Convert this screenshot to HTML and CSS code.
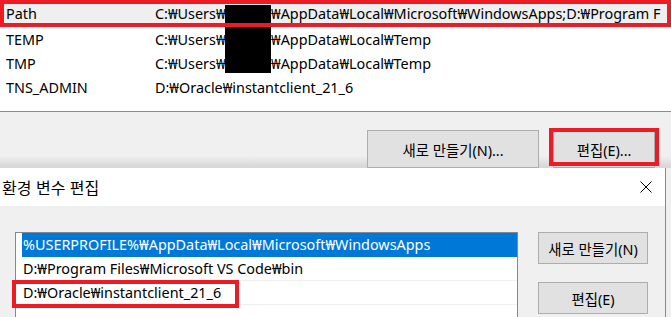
FILE: index.html
```html
<!DOCTYPE html>
<html lang="ko">
<head>
<meta charset="utf-8">
<link rel="stylesheet" href="styles.css">
</head>
<body>
<div class="screen">
  <section class="parent">
    <div class="varlist">
      <div class="vrow sel"><span class="vname">Path</span><span class="vval"><span class="upre">C:₩Users₩</span><span class="uname"></span>₩AppData₩Local₩Microsoft₩WindowsApps;D:₩Program F</span></div>
      <div class="vrow"><span class="vname">TEMP</span><span class="vval"><span class="upre">C:₩Users₩</span><span class="uname"></span>₩AppData₩Local₩Temp</span></div>
      <div class="vrow"><span class="vname">TMP</span><span class="vval"><span class="upre">C:₩Users₩</span><span class="uname"></span>₩AppData₩Local₩Temp</span></div>
      <div class="vrow"><span class="vname">TNS_ADMIN</span><span class="vval">D:₩Oracle₩instantclient_21_6</span></div>
      <div class="redact"></div>
      <div class="mark mark-path"></div>
    </div>
    <div class="btnbar">
      <button class="wbtn btn-new">새로 만들기(N)...</button>
      <button class="wbtn btn-edit">편집(E)...</button>
      <div class="mark mark-edit"></div>
    </div>
  </section>
  <section class="dialog">
    <header class="titlebar">
      <span class="title">환경 변수 편집</span>
      <svg class="close" width="12" height="12" viewBox="0 0 12 12"><path d="M0.5 0.5 L11.5 11.5 M11.5 0.5 L0.5 11.5" stroke="#000" stroke-width="1" fill="none"/></svg>
    </header>
    <div class="dbody">
      <div class="plist">
        <div class="prow active">%USERPROFILE%₩AppData₩Local₩Microsoft₩WindowsApps</div>
        <div class="prow">D:₩Program Files₩Microsoft VS Code₩bin</div>
        <div class="prow">D:₩Oracle₩instantclient_21_6</div>
        <div class="prow"></div>
        <div class="mark mark-row"></div>
      </div>
      <div class="dbtns">
        <button class="wbtn dbtn">새로 만들기(N)</button>
        <button class="wbtn dbtn">편집(E)</button>
      </div>
    </div>
  </section>
</div>
</body>
</html>
```
FILE: styles.css
```css
* { box-sizing: border-box; }
html, body { margin: 0; padding: 0; }
body {
  width: 671px;
  height: 317px;
  overflow: hidden;
  background: #f0f0f0;
  font-family: "Noto Sans", "Noto Sans CJK KR", sans-serif;
  font-size: 14.4px;
  color: #000;
}
.screen { width: 671px; height: 317px; display: flex; flex-direction: column; overflow: hidden; }

.parent { height: 167px; flex: none; display: flex; flex-direction: column; background: #f0f0f0; }
.varlist {
  position: relative;
  height: 112px;
  background: #fff;
  border-bottom: 1px solid #8c8c8c;
  padding-top: 3px;
  flex: none;
}
.vrow { height: 24px; display: flex; align-items: center; white-space: nowrap; overflow: hidden; }
.vrow.sel { background: #efefef; height: 20px; margin-bottom: 4px; }
.vname { width: 155px; flex: none; padding-left: 6px; }
.vval { white-space: nowrap; }
.upre { display: inline-block; width: 70px; }
.uname { display: inline-block; width: 46px; }
.redact { position: absolute; left: 225px; top: 5px; width: 46px; height: 68px; background: #000; }
.mark { position: absolute; border: 4px solid #ed1c24; pointer-events: none; }
.mark-path { left: 0; top: 0; width: 671px; height: 27px; }

.btnbar {
  position: relative;
  flex: 1;
  display: flex;
  align-items: flex-start;
  gap: 14px;
  padding: 18px 0 0 367px;
  background: linear-gradient(to bottom, #f0f0f0 0, #f0f0f0 44px, #d8d8d8 54px);
}
.wbtn {
  font-family: "Noto Sans", "Noto Sans CJK KR", sans-serif;
  font-size: 14.4px;
  color: #000;
  background: #e1e1e1;
  border: 1px solid #adadad;
  padding: 0;
  margin: 0;
}
.btn-new { width: 172px; height: 38px; }
.btn-edit { width: 102px; height: 38px; }
.mark-edit { left: 549px; top: 16px; width: 110px; height: 38px; }

.dialog {
  flex: 1;
  width: 666px;
  background: #f0f0f0;
  border-top: 1px solid #6e6e6e;
  border-right: 1px solid #8a8a8a;
  display: flex;
  flex-direction: column;
}
.titlebar {
  height: 38px;
  background: #fff;
  display: flex;
  align-items: center;
  justify-content: space-between;
  padding: 0 13px 0 2px;
  flex: none;
}
.title { font-family: "Noto Sans CJK KR", sans-serif; font-size: 16px; }
.close { display: block; }
.dbody { display: flex; padding: 26px 0 0 15px; gap: 20px; }
.plist {
  position: relative;
  width: 503px;
  height: 120px;
  background: #fff;
  border: 1px solid #828790;
  border-bottom: none;
  padding-left: 6px;
  flex: none;
}
.prow {
  height: 24px;
  border-bottom: 1px solid #f0f0f0;
  padding-left: 1px;
  display: flex;
  align-items: center;
  white-space: nowrap;
}
.prow.active { background: #0078d7; color: #fff; border-bottom-color: #0078d7; }
.mark-row { left: -4px; top: 47px; width: 227px; height: 28px; }
.dbtns { display: flex; flex-direction: column; gap: 18px; }
.dbtn { width: 110px; height: 32px; }
```
